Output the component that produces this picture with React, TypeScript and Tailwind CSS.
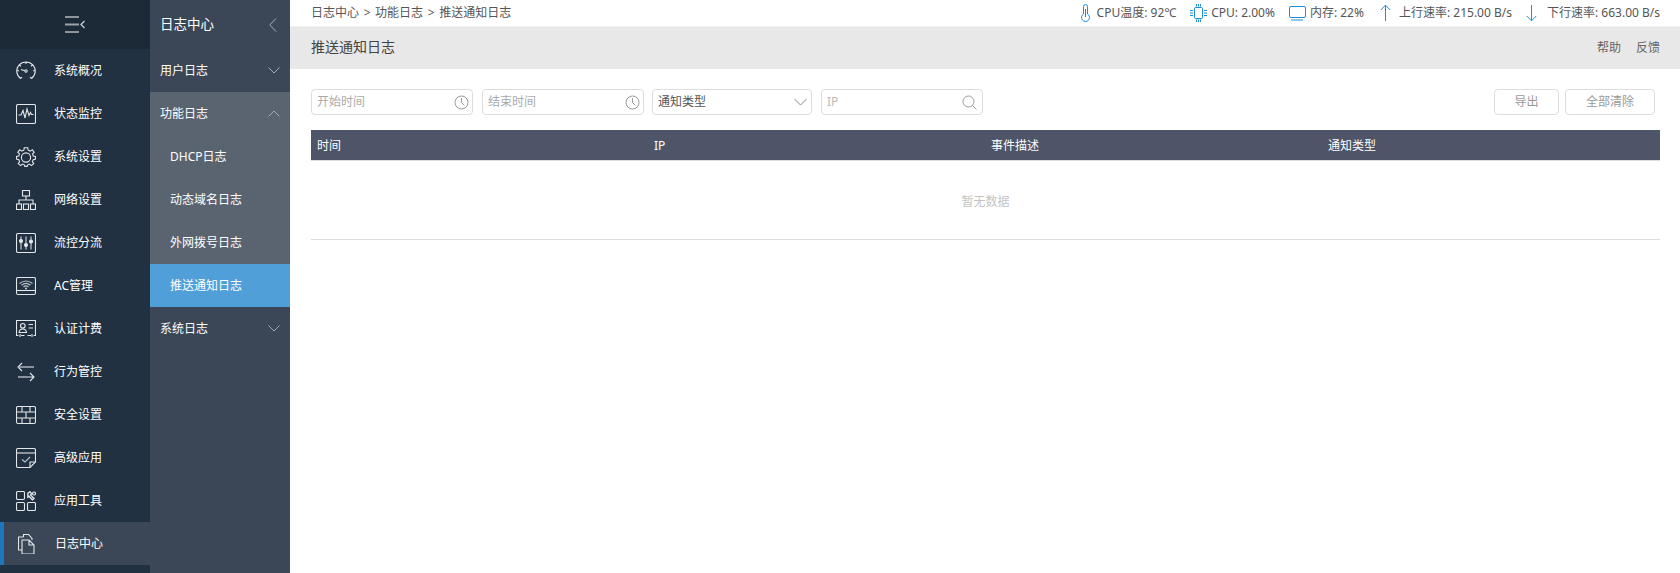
import type { ReactNode } from "react";

const font = { fontFamily: '"Noto Sans", "Noto Sans CJK SC", sans-serif' };

const Ico = ({ children }: { children: ReactNode }) => (
    <svg width="20" height="20" viewBox="0 0 20 20" fill="none" stroke="#e4e7ea" strokeWidth="1.1" className="shrink-0">
        {children}
    </svg>
);

const menu: { name: string; icon: ReactNode; active?: boolean }[] = [
    {
        name: "系统概况",
        icon: (
            <Ico>
                <path d="M4.5 17.5 A9.2 9.2 0 1 1 15.5 17.5 M4.5 17.5 L6 16.2 M15.5 17.5 L14 16.2 M10 1 V3 M1 9.8 H3 M17 9.8 H19 M3.6 4 L5 5.3 M16.4 4 L15 5.3" />
                <path d="M5 8.5 L8.8 9.7" />
                <circle cx="10" cy="10" r="1.2" />
            </Ico>
        ),
    },
    {
        name: "状态监控",
        icon: (
            <Ico>
                <rect x="0.5" y="0.5" width="19" height="19" rx="1.5" />
                <path d="M2.5 11 H5 L7 6.5 L9 14 L11 5 L13 11.5 L14.5 8.5 L15.5 10.5 H17.5" />
            </Ico>
        ),
    },
    {
        name: "系统设置",
        icon: (
            <Ico>
                <path d="M8.3 0.8 H11.7 L12.2 3.2 L14.2 4.1 L16.3 2.8 L18.2 5.2 L16.6 7 L17.2 9 L19.5 9.4 V12 L17.2 12.6 L16.4 14.6 L17.7 16.6 L15.4 18.6 L13.6 17.1 L11.7 17.8 L11.2 19.4 H8.8 L8.3 17.8 L6.4 17.1 L4.6 18.6 L2.3 16.6 L3.6 14.6 L2.8 12.6 L0.5 12 V9.4 L2.8 9 L3.4 7 L1.8 5.2 L3.7 2.8 L5.8 4.1 L7.8 3.2 Z" />
                <circle cx="10" cy="10.5" r="4.6" />
            </Ico>
        ),
    },
    {
        name: "网络设置",
        icon: (
            <Ico>
                <rect x="6.5" y="0.5" width="7" height="5.5" />
                <path d="M10 6 V10 M3 14 V10 H17 V14" />
                <rect x="0.5" y="14" width="5" height="5.5" />
                <rect x="7.5" y="14" width="5" height="5.5" />
                <rect x="14.5" y="14" width="5" height="5.5" />
            </Ico>
        ),
    },
    {
        name: "流控分流",
        icon: (
            <Ico>
                <rect x="0.5" y="0.5" width="19" height="19" rx="1.5" />
                <path d="M5 3.5 V16.5 M10 3.5 V16.5 M15 3.5 V16.5" stroke="#9aa3ad" strokeWidth="1.6" />
                <circle cx="5" cy="8" r="1.5" fill="#e4e7ea" />
                <circle cx="10" cy="12" r="1.5" fill="#e4e7ea" />
                <circle cx="15" cy="8.5" r="1.5" fill="#e4e7ea" />
            </Ico>
        ),
    },
    {
        name: "AC管理",
        icon: (
            <Ico>
                <rect x="0.5" y="1.5" width="19" height="17" rx="1.5" />
                <path d="M0.5 14.5 H19.5" />
                <path d="M3.5 7.5 Q10 2.5 16.5 7.5 M5.5 9.2 Q10 5.6 14.5 9.2 M7.5 11 Q10 8.8 12.5 11" stroke="#b9c0c8" strokeWidth="1.2" />
                <circle cx="10" cy="12.5" r="0.9" fill="#e4e7ea" stroke="none" />
            </Ico>
        ),
    },
    {
        name: "认证计费",
        icon: (
            <Ico>
                <path d="M2.5 16.5 H0.5 V1.5 H19.5 V16.5 H17.5 M5 16.5 H8.5 M11.5 16.5 H15 M4 15 V18 M16 15 V18" />
                <circle cx="6.8" cy="6.8" r="2.3" />
                <path d="M3 13.5 Q3.5 10 6.8 10 Q10 10 10.5 13.5 Z" />
                <path d="M12.5 5.5 H17 M12.5 9 H17" />
            </Ico>
        ),
    },
    {
        name: "行为管控",
        icon: (
            <Ico>
                <path d="M2 5 H18 M6 1 L2 5 L6 9" />
                <path d="M2 15 H18 M14 11 L18 15 L14 19" />
                <path d="M2 5 H18 M2 15 H12" stroke="#8f98a3" strokeWidth="1.2" />
            </Ico>
        ),
    },
    {
        name: "安全设置",
        icon: (
            <Ico>
                <rect x="0.5" y="1.5" width="19" height="17" rx="1.5" />
                <path d="M0.5 7 H19.5 M0.5 13 H19.5 M6 1.5 V7 M14 1.5 V7 M10 7 V13 M6 13 V18.5 M14 13 V18.5" />
            </Ico>
        ),
    },
    {
        name: "高级应用",
        icon: (
            <Ico>
                <path d="M14 19.5 H2 Q0.5 19.5 0.5 18 V2 Q0.5 0.5 2 0.5 H18 Q19.5 0.5 19.5 2 V14 Z" />
                <path d="M0.5 5 H19.5" />
                <path d="M6 11.5 L9 14 L14 9" stroke="#b9c0c8" />
                <path d="M14 19.5 V14 H19.5" />
            </Ico>
        ),
    },
    {
        name: "应用工具",
        icon: (
            <Ico>
                <rect x="0.5" y="0.5" width="8" height="8" rx="1.2" />
                <rect x="0.5" y="11.5" width="8" height="8" rx="1.2" />
                <rect x="11.5" y="11.5" width="8" height="8" rx="1.2" />
                <path d="M12 2 L14 0.8 L15.5 2.5 L14.5 4 L18 7.5 L16.5 8.8 L13 5.4 L11.8 6 Z" strokeWidth="1.4" />
                <circle cx="18" cy="2.5" r="1.5" strokeWidth="1.2" />
            </Ico>
        ),
    },
    {
        name: "日志中心",
        active: true,
        icon: (
            <svg width="20" height="20" viewBox="0 0 20 20" fill="none" stroke="#e4e7ea" strokeWidth="1.1" className="shrink-0">
                <path d="M5.5 3 V0.5 H10.5 L14 4.5 V6 M4 16 H0.5 V3 H5.5" />
                <path d="M4 6 H11 L16 11 V20 H4 Z M11 6 V11 H16" />
            </svg>
        ),
    },
];

const Chevron = ({ up }: { up?: boolean }) => (
    <svg width="12" height="7" viewBox="0 0 12 7" fill="none" stroke="#a4abb4" strokeWidth="1">
        <path d={up ? "M0.5 6.5 L6 1 L11.5 6.5" : "M0.5 0.5 L6 6 L11.5 0.5"} />
    </svg>
);

const Clock = () => (
    <svg width="15" height="15" viewBox="0 0 15 15" fill="none" stroke="#9a9a9a" strokeWidth="1">
        <circle cx="7.5" cy="7.5" r="6.5" />
        <path d="M7.5 3 V7.5 L10.5 10.5" />
    </svg>
);

const StatIcon = ({ w, children }: { w: number; children: ReactNode }) => (
    <svg width={w} height="18" viewBox={`0 0 ${w} 18`} fill="none" stroke="#1f8dd6" strokeWidth="1" className="shrink-0">
        {children}
    </svg>
);

const stats: { text: string; cls: string; icon: ReactNode }[] = [
    {
        text: "CPU温度: 92℃",
        cls: "flex items-center gap-[6px]",
        icon: (
            <StatIcon w={11}>
                <path d="M3.5 10 V2.5 A2 2 0 0 1 7.5 2.5 V10 A4 4 0 1 1 3.5 10 Z" />
                <path d="M5.5 5 V13" />
            </StatIcon>
        ),
    },
    {
        text: "CPU: 2.00%",
        cls: "flex items-center gap-[4px] ml-[14px]",
        icon: (
            <StatIcon w={17}>
                <rect x="4.5" y="3.5" width="8" height="11" rx="1" />
                <path d="M0 6.5 H3 M0 9 H3 M0 11.5 H3 M14 6.5 H17 M14 9 H17 M14 11.5 H17 M6.5 0 V2.5 M8.5 0 V2.5 M10.5 0 V2.5 M6.5 15.5 V18 M8.5 15.5 V18 M10.5 15.5 V18" />
            </StatIcon>
        ),
    },
    {
        text: "内存: 22%",
        cls: "flex items-center gap-[4px] ml-[14px]",
        icon: (
            <StatIcon w={17}>
                <rect x="0.5" y="2.5" width="16" height="11" rx="1.5" />
                <path d="M3 15 V17 M5 15 V17 M7 15 V17 M9 15 V17 M11 15 V17 M13 15 V17" />
            </StatIcon>
        ),
    },
    {
        text: "上行速率: 215.00 B/s",
        cls: "flex items-center gap-[8px] ml-[16px]",
        icon: (
            <StatIcon w={11}>
                <path d="M5.5 17 V1.5 M0.8 6 L5.5 1.2 L10.2 6" />
            </StatIcon>
        ),
    },
    {
        text: "下行速率: 663.00 B/s",
        cls: "flex items-center gap-[10px] ml-[14px]",
        icon: (
            <StatIcon w={11}>
                <path d="M5.5 1 V16.5 M0.8 12 L5.5 16.8 L10.2 12" />
            </StatIcon>
        ),
    },
];

const subRow = "h-[43px] flex items-center justify-between pl-[10px] pr-[10px] text-xs text-white";

export default function App() {
    return (
        <div className="h-screen flex bg-white overflow-hidden" style={font}>
            <aside className="w-[150px] shrink-0 bg-[#223142]">
                <div className="h-[49px] bg-[#1c2a38] flex items-center justify-center">
                    <svg width="20" height="17" viewBox="0 0 20 17" fill="none" stroke="#fff" strokeWidth="1">
                        <path d="M0 1 H14 M0 16 H14" />
                        <path d="M0 8.5 H14" stroke="#9aa1aa" strokeWidth="2" />
                        <path d="M19.5 5 L16 8.5 L19.5 12" stroke="#c7cbd0" strokeWidth="1.3" />
                    </svg>
                </div>
                {menu.map((item) => (
                    <div
                        key={item.name}
                        className={
                            item.active
                                ? "h-[43px] flex items-center gap-[17px] pl-[14px] border-l-4 border-[#1f77bb] bg-[#3b4757] text-xs text-white"
                                : "h-[43px] flex items-center gap-[18px] pl-[16px] text-xs text-white"
                        }
                    >
                        {item.icon}
                        <span>{item.name}</span>
                    </div>
                ))}
            </aside>

            <nav className="w-[140px] shrink-0 bg-[#3b4757]">
                <div className="h-[49px] flex items-center justify-between pl-[10px] pr-[13px] text-[13.5px] text-white">
                    <span>日志中心</span>
                    <svg width="8" height="14" viewBox="0 0 8 14" fill="none" stroke="#a4abb4" strokeWidth="1">
                        <path d="M7 0.5 L0.8 7 L7 13.5" />
                    </svg>
                </div>
                <div className={subRow}>
                    <span>用户日志</span>
                    <Chevron />
                </div>
                <div className="bg-[#5a6370]">
                    <div className={subRow}>
                        <span>功能日志</span>
                        <Chevron up />
                    </div>
                    <div className="h-[43px] flex items-center pl-[20px] text-xs text-white">DHCP日志</div>
                    <div className="h-[43px] flex items-center pl-[20px] text-xs text-white">动态域名日志</div>
                    <div className="h-[43px] flex items-center pl-[20px] text-xs text-white">外网拨号日志</div>
                    <div className="h-[43px] flex items-center pl-[20px] text-xs text-white bg-[#519fd9]">推送通知日志</div>
                </div>
                <div className={subRow}>
                    <span>系统日志</span>
                    <Chevron />
                </div>
            </nav>

            <main className="flex-1 min-w-0">
                <header className="h-[27px] border-b border-[#eeeeee] flex items-center justify-between pl-[21px] pr-[20px] text-xs text-[#555]">
                    <span className="whitespace-pre">
                        日志中心 <span className="mx-[1.5px]">&gt;</span> 功能日志 <span className="mx-[1.5px]">&gt;</span> 推送通知日志
                    </span>
                    <div className="flex items-center">
                        {stats.map((s) => (
                            <div key={s.text} className={s.cls}>
                                {s.icon}
                                <span>{s.text}</span>
                            </div>
                        ))}
                    </div>
                </header>

                <div className="h-[42px] bg-[#e8e8e8] flex items-center justify-between pl-[21px] pr-[20px]">
                    <span className="text-sm text-[#444] pb-[3px]">推送通知日志</span>
                    <div className="flex gap-[15px] text-xs text-[#666]">
                        <span>帮助</span>
                        <span>反馈</span>
                    </div>
                </div>

                <div className="px-[21px] pr-[20px] pt-[20px]">
                    <div className="flex justify-between">
                        <div className="flex gap-[9px] text-xs">
                            <div className="w-[162px] h-[26px] border border-[#ddd] rounded-sm flex items-center justify-between pl-[5px] pr-[3px] text-[#aaa]">
                                <span>开始时间</span>
                                <Clock />
                            </div>
                            <div className="w-[162px] h-[26px] border border-[#ddd] rounded-sm flex items-center justify-between pl-[5px] pr-[3px] text-[#aaa]">
                                <span>结束时间</span>
                                <Clock />
                            </div>
                            <div className="-ml-px w-[160px] h-[26px] border border-[#ddd] rounded-sm flex items-center justify-between pl-[5px] pr-[4px] text-[#555]">
                                <span>通知类型</span>
                                <svg width="13" height="8" viewBox="0 0 13 8" fill="none" stroke="#888" strokeWidth="1">
                                    <path d="M0.5 1 L6.5 7 L12.5 1" />
                                </svg>
                            </div>
                            <div className="w-[162px] h-[26px] border border-[#ddd] rounded-sm flex items-center justify-between pl-[5px] pr-[5px] text-[#bbb]">
                                <span>IP</span>
                                <svg width="15" height="15" viewBox="0 0 15 15" fill="none" stroke="#999" strokeWidth="1">
                                    <circle cx="6.5" cy="6.5" r="5.5" />
                                    <path d="M10.5 10.5 L14.5 14.5" />
                                </svg>
                            </div>
                        </div>
                        <div className="flex gap-[6px] mr-[5px] text-xs text-[#999]">
                            <div className="w-[65px] h-[26px] border border-[#ddd] rounded-sm flex items-center justify-center">导出</div>
                            <div className="w-[90px] h-[26px] border border-[#ddd] rounded-sm flex items-center justify-center">全部清除</div>
                        </div>
                    </div>

                    <div className="mt-[15px] h-[31px] bg-[#4e5568] border-b border-[#dddddd] pt-px grid grid-cols-[337px_337px_337px_1fr] items-center text-xs text-white">
                        <div className="pl-[6px]">时间</div>
                        <div className="pl-[6px]">IP</div>
                        <div className="pl-[6px]">事件描述</div>
                        <div className="pl-[6px]">通知类型</div>
                    </div>
                    <div className="h-[79px] border-b border-[#dddddd] flex items-center justify-center pt-[4px] text-xs text-[#c4c4c4]">
                        暂无数据
                    </div>
                </div>
            </main>
        </div>
    );
}
